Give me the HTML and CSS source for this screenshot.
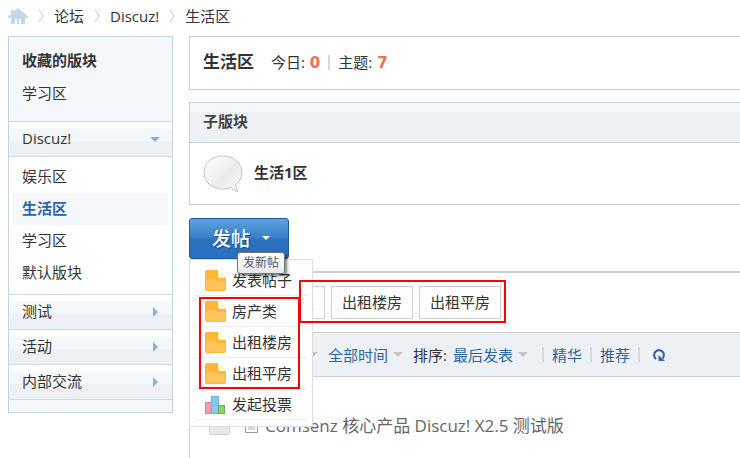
FILE: index.html
```
<!DOCTYPE html>
<html lang="zh-CN">
<head>
    <meta charset="UTF-8">
    <meta name="viewport" content="width=device-width, initial-scale=1.0">
    <title>生活区 - Discuz!</title>
    <link rel="stylesheet" href="styles.css">
</head>
<body>
    <nav class="crumbs">
        <a href="#" class="home" aria-label="首页">
            <svg width="20" height="16" viewBox="0 0 20 16"><path fill="#c3d7e6" d="M10 0L6 3.500V2H3v4L0 8.500V10h3v6h4v-5h2v5h2v-5h2v5h4v-6h3V8.500z"/></svg>
        </a>
        <svg class="sep" width="6" height="12" viewBox="0 0 6 12"><path d="M1 0l4 6-4 6"/></svg>
        <a href="#">论坛</a>
        <svg class="sep" width="6" height="12" viewBox="0 0 6 12"><path d="M1 0l4 6-4 6"/></svg>
        <a href="#">Discuz!</a>
        <svg class="sep" width="6" height="12" viewBox="0 0 6 12"><path d="M1 0l4 6-4 6"/></svg>
        <a href="#">生活区</a>
    </nav>

    <div class="wrap">
        <aside class="sidebar">
            <div class="fav">
                <h2>收藏的版块</h2>
                <a href="#">学习区</a>
            </div>
            <h3 class="open"><a href="#">Discuz!</a></h3>
            <ul>
                <li><a href="#">娱乐区</a></li>
                <li class="active"><a href="#">生活区</a></li>
                <li><a href="#">学习区</a></li>
                <li><a href="#">默认版块</a></li>
            </ul>
            <h3><a href="#">测试</a></h3>
            <h3><a href="#">活动</a></h3>
            <h3><a href="#">内部交流</a></h3>
        </aside>

        <main>
            <section class="box forum-head">
                <h1>生活区</h1>
                <span>今日: <strong>0</strong></span>
                <i class="pipe"></i>
                <span>主题: <strong>7</strong></span>
            </section>

            <section class="box sub-forum">
                <h2>子版块</h2>
                <div class="sub-row">
                    <svg width="40" height="38" viewBox="0 0 40 38">
                        <defs>
                            <linearGradient id="bubble" x1="0" y1="0" x2="1" y2="1">
                                <stop offset="0" stop-color="#fff"/>
                                <stop offset=".3" stop-color="#f3f6f9"/>
                                <stop offset=".55" stop-color="#ebebe9"/>
                                <stop offset="1" stop-color="#f6f8fa"/>
                            </linearGradient>
                        </defs>
                        <path fill="url(#bubble)" stroke="#c4c4c4" d="M19.500 1C9 1 1 8 1 17.500S9 34 19.500 34c3 0 6-.5 8.500-1.500 2 2 4 3.500 7 4-1.500-2-2-4.500-2-7 3.500-3 6-7 6-12C39 8 30.500 1 19.500 1z"/>
                    </svg>
                    <a href="#">生活1区</a>
                </div>
            </section>

            <div class="post">
                <button type="button" class="post-btn">发帖</button>
                <span class="tip" role="tooltip">发新帖</span>
                <ul class="menu">
                    <li><a href="#"><svg width="21" height="21" viewBox="0 0 21 21"><use href="#note"/></svg>发表帖子</a></li>
                    <li><a href="#"><svg width="21" height="21" viewBox="0 0 21 21"><use href="#note"/></svg>房产类</a></li>
                    <li><a href="#"><svg width="21" height="21" viewBox="0 0 21 21"><use href="#note"/></svg>出租楼房</a></li>
                    <li><a href="#"><svg width="21" height="21" viewBox="0 0 21 21"><use href="#note"/></svg>出租平房</a></li>
                    <li><a href="#"><svg width="21" height="21" viewBox="0 0 21 21">
                        <rect x="0.500" y="8.500" width="6" height="11" fill="#f799ab" stroke="#ea7f9c"/>
                        <rect x="6.500" y="2.500" width="7" height="17" fill="#86c8f2" stroke="#68b0e4"/>
                        <rect x="13.500" y="11.500" width="6" height="8" fill="#8ccf72" stroke="#62b04f"/>
                    </svg>发起投票</a></li>
                </ul>
                <div class="mark mark-menu"></div>
            </div>

            <section class="threads">
                <div class="types">
                    <a href="#">全部</a>
                    <a href="#">房产类</a>
                    <a href="#">出租楼房</a>
                    <a href="#">出租平房</a>
                    <div class="mark mark-types"></div>
                </div>
                <div class="filter">
                    <label for="kind">筛选:</label>
                    <span class="drop"><select id="kind"><option>全部主题</option></select></span>
                    <span class="drop"><select aria-label="时间"><option>全部时间</option></select></span>
                    <label for="order">排序:</label>
                    <span class="drop"><select id="order"><option>最后发表</option></select></span>
                    <i class="pipe"></i>
                    <a href="#">精华</a>
                    <i class="pipe"></i>
                    <a href="#">推荐</a>
                    <i class="pipe"></i>
                    <button type="button" class="refresh" aria-label="刷新">
                        <svg width="14" height="14" viewBox="0 0 14 14"><path fill="none" stroke="#3a66a0" stroke-width="2.200" d="M4 11A4.900 4.900 0 1 1 10.500 10.500"/><path fill="#3a66a0" d="M6.500 7v6H13z"/></svg>
                    </button>
                </div>
                <div class="thread">
                    <svg width="21" height="18" viewBox="0 0 21 18"><rect x=".5" y=".5" width="20" height="17" rx="2" fill="#e8e8e8" stroke="#ccc"/></svg>
                    <svg class="win" width="13" height="13" viewBox="0 0 13 13"><path fill="#fff" stroke="#999" d="M.5.5h12v12H.5z"/><path fill="#d4d4d4" d="M3 3h7v7H3z"/></svg>
                    <a href="#">Comsenz 核心产品 Discuz! X2.5 测试版</a>
                </div>
            </section>
        </main>
    </div>

    <svg class="sprite" width="0" height="0">
        <symbol id="note" viewBox="0 0 21 21">
            <path fill="#ffb536" d="M2 0h11l8 8v11a2 2 0 0 1-2 2H2a2 2 0 0 1-2-2V2a2 2 0 0 1 2-2z"/>
            <path fill="#ffc55c" d="M1 11l2-2h7l2 2h8v8l-1 1H2l-1-1z"/>
            <path fill="#fffbd0" d="M13 0l8 8h-6a2 2 0 0 1-2-2z"/>
        </symbol>
    </svg>
</body>
</html>
```
FILE: styles.css
```
* {
    margin: 0;
    padding: 0;
    box-sizing: border-box;
}

body {
    font-family: "Open Sans", "Noto Sans CJK SC", sans-serif;
    font-size: 15px;
    line-height: 20px;
    color: #333;
    background: #fff;
    padding-left: 8px;
    overflow-x: hidden;
}

a {
    color: #333;
    text-decoration: none;
}

ul {
    list-style: none;
}

.crumbs {
    display: flex;
    align-items: center;
    gap: 10px;
    height: 36px;
    padding-bottom: 5px;
}

.crumbs .home {
    display: flex;
}

.sep {
    fill: none;
    stroke: #c4c4c4;
    stroke-width: 1;
}

.wrap {
    display: flex;
    align-items: flex-start;
    gap: 16px;
}

/* sidebar */
.sidebar {
    flex: 0 0 165px;
    border: 1px solid #bcd6e6;
    background: #f4f8fb;
    padding-bottom: 12px;
}

.fav {
    padding: 13px 13px 18px;
}

.fav h2 {
    font-size: 15px;
    margin-bottom: 13px;
}

.fav a {
    display: block;
}

.sidebar h3 {
    position: relative;
    height: 35px;
    padding: 0 13px;
    font-size: 15px;
    font-weight: normal;
    line-height: 32px;
    border-bottom: 1px solid #c6dbe9;
    background: linear-gradient(#fff 0, #fff 6px, #f4f8fb 7px, #f4f8fb 18px, #edf1f5 20px);
}

.sidebar h3::after {
    content: "";
    position: absolute;
    right: 14px;
    top: 12px;
    border: 5px solid transparent;
    border-left-color: #86b4d4;
    border-right: 0;
}

.sidebar h3.open {
    height: 36px;
    border-top: 1px solid #c6dbe9;
}

.sidebar h3.open::after {
    right: 12px;
    top: 15px;
    border: 5px solid transparent;
    border-top-color: #86b4d4;
    border-bottom: 0;
}

.sidebar ul {
    padding: 4px 4px 5px;
    background: #fff;
    border-bottom: 1px solid #c6dbe9;
}

.sidebar li {
    padding: 5px 9px 7px;
}

.sidebar li.active {
    background: #f4f8fb;
}

.sidebar li.active a {
    color: #2b65a0;
    font-weight: bold;
}

/* main column */
main {
    flex: 1;
    min-width: 0;
}

.box {
    border: 1px solid #cdcdcd;
    border-right: 0;
    margin-bottom: 12px;
}

.forum-head {
    display: flex;
    align-items: center;
    height: 54px;
    padding: 0 13px 2px;
}

.forum-head h1 {
    font-size: 17px;
    margin-right: 17px;
}

.forum-head strong {
    font-family: "DejaVu Sans", sans-serif;
    margin-left: 1px;
    color: #f26c4f;
}

.pipe {
    width: 2px;
    height: 15px;
    margin: 0 8px;
    background: #d3dbe1;
}

.sub-forum {
    border-top-color: #c2d5e3;
    margin-bottom: 13px;
}

.sub-forum h2 {
    height: 40px;
    padding: 0 13px;
    font-size: 15px;
    line-height: 36px;
    color: #444;
    border-bottom: 1px solid #c2d5e3;
    background: linear-gradient(#f4f8fb 9px, #edf1f5 9px);
}

.sub-row {
    display: flex;
    align-items: center;
    gap: 11px;
    height: 61px;
    padding: 0 13px;
}

.sub-row a {
    padding-bottom: 4px;
    font-weight: bold;
}

/* new post button and its menu */
.post {
    position: relative;
    z-index: 1;
    margin-bottom: 12px;
}

.post-btn {
    display: flex;
    align-items: center;
    justify-content: center;
    gap: 12px;
    width: 100px;
    height: 41px;
    padding: 0 0 2px 4px;
    border: 1px solid #205c9f;
    border-radius: 3px;
    background: linear-gradient(#5aa3dc, #3b82c9 45%, #2b70b9 55%, #266fc4);
    color: #fff;
    font: 500 19px "Open Sans", "Noto Sans CJK SC", sans-serif;
    text-shadow: 1px 1px 1px #1d4f88;
    cursor: pointer;
}

.post-btn::after {
    content: "";
    border: 4px solid transparent;
    border-top-color: #fff;
    border-bottom: 0;
}

.tip {
    position: absolute;
    z-index: 2;
    left: 48px;
    top: 34px;
    padding: 0 5px;
    border: 1px solid #767676;
    border-radius: 3px;
    background: linear-gradient(#fff, #e8e9f1);
    box-shadow: 2px 2px 3px rgba(0, 0, 0, 0.5);
    font-size: 12px;
    color: #575757;
}

.menu {
    position: absolute;
    left: 0;
    top: 41px;
    width: 124px;
    padding: 5px 5px 6px;
    border: 1px solid #ddd;
    background: #fefefe;
}

.menu li {
    border-bottom: 1px solid #e9eef2;
}

.menu a {
    display: flex;
    align-items: center;
    gap: 6px;
    height: 30px;
    padding-left: 10px;
}

.mark {
    position: absolute;
    border: 2px solid #f00;
}

.mark-menu {
    left: 10px;
    top: 79px;
    width: 101px;
    height: 92px;
}

.mark-types {
    z-index: 2;
    right: -5px;
    top: 7px;
    bottom: 9px;
    width: 207px;
}

/* thread list */
.threads {
    border-left: 1px solid #cdcdcd;
    border-top: 2px solid #cdcdcd;
}

.types {
    position: relative;
    display: flex;
    gap: 6px;
    width: max-content;
    padding: 13px 0 13px 10px;
}

.types a {
    padding: 5px 10px 6px;
    border: 1px solid #cdcdcd;
    background: #fff;
}

.filter {
    display: flex;
    align-items: center;
    height: 45px;
    padding-left: 13px;
    border-top: 1px solid #cdcdcd;
    border-bottom: 1px solid #cdcdcd;
    background: #edf1f5;
    white-space: nowrap;
}

.filter a,
.filter select {
    color: #2b65a0;
}

.filter label {
    width: 40px;
}

.drop {
    display: flex;
    align-items: center;
    gap: 4px;
    margin-right: 10px;
}

.drop::after {
    content: "";
    border: 5px solid transparent;
    border-top-color: #c4c4c4;
    border-bottom: 0;
}

.drop + .pipe {
    margin-left: 4px;
}

.drop select {
    appearance: none;
    border: 0;
    background: none;
    font: inherit;
}

.refresh {
    display: flex;
    margin-left: 4px;
    border: 0;
    background: none;
    cursor: pointer;
}

.thread {
    display: flex;
    align-items: center;
    height: 98px;
    padding-left: 19px;
    gap: 7px;
    font-size: 17px;
}

.thread .win {
    margin-left: 8px;
}

.thread a {
    color: #666;
}

.sprite {
    position: absolute;
}
```
